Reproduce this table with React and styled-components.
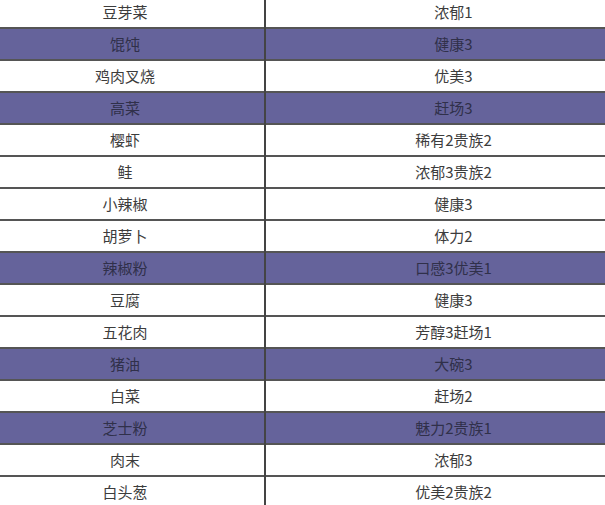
import React from "react";
import styled, { createGlobalStyle } from "styled-components";

// Ingredient effects list
const rows = [
  { name: "豆芽菜", effect: "浓郁1", hl: false },
  { name: "馄饨", effect: "健康3", hl: true },
  { name: "鸡肉叉烧", effect: "优美3", hl: false },
  { name: "高菜", effect: "赶场3", hl: true },
  { name: "樱虾", effect: "稀有2贵族2", hl: false },
  { name: "鲑", effect: "浓郁3贵族2", hl: false },
  { name: "小辣椒", effect: "健康3", hl: false },
  { name: "胡萝卜", effect: "体力2", hl: false },
  { name: "辣椒粉", effect: "口感3优美1", hl: true },
  { name: "豆腐", effect: "健康3", hl: false },
  { name: "五花肉", effect: "芳醇3赶场1", hl: false },
  { name: "猪油", effect: "大碗3", hl: true },
  { name: "白菜", effect: "赶场2", hl: false },
  { name: "芝士粉", effect: "魅力2贵族1", hl: true },
  { name: "肉末", effect: "浓郁3", hl: false },
  { name: "白头葱", effect: "优美2贵族2", hl: false },
];

const GlobalStyle = createGlobalStyle`
  html, body {
    margin: 0;
    padding: 0;
    background: #fff;
    overflow: hidden;
  }
  body {
    font-family: "Noto Sans CJK SC", "Liberation Sans", sans-serif;
  }
`;

const Viewport = styled.div`
  width: 605px;
  height: 505px;
  overflow: hidden;
`;

const Table = styled.table`
  border-collapse: collapse;
  width: 653px;
  margin: -4px 0 0 -14px;
  table-layout: fixed;
`;

const Row = styled.tr`
  height: 32px;
  background: ${(p) => (p.$hl ? "#65639b" : "#ffffff")};
  border-bottom: 2px solid #555555;
`;

const Cell = styled.td`
  height: 30px;
  padding: 0;
  text-align: center;
  vertical-align: middle;
  font-size: 15px;
  line-height: 30px;
  color: ${(p) => (p.$hl ? "#30304a" : "#3c3c3c")};
  width: ${(p) => p.$w}px;

  & + & {
    border-left: 2px solid #444444;
  }
`;

export default function App() {
  return (
    <Viewport>
      <GlobalStyle />
      <Table>
        <tbody>
          {rows.map((r) => (
            <Row key={r.name} $hl={r.hl}>
              <Cell $hl={r.hl} $w={278}>{r.name}</Cell>
              <Cell $hl={r.hl} $w={375}>{r.effect}</Cell>
            </Row>
          ))}
        </tbody>
      </Table>
    </Viewport>
  );
}
